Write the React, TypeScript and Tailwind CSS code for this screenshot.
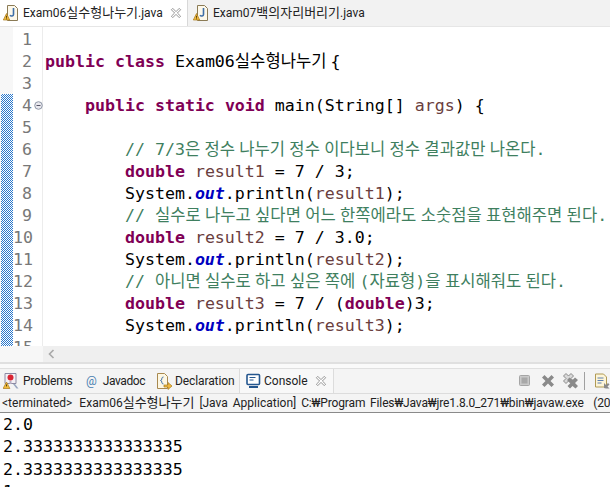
const uiFont = "font-['Roboto','Noto_Sans_CJK_KR',sans-serif]";

const kw = "font-bold text-[#7f0055]";
const cm = "text-[#3f7f5f] [word-spacing:-5.7px]";
const vr = "text-[#6a3e3e]";
const st = "font-bold italic text-[#0000c0]";

const JavaFileIcon = () => (
  <svg width="16" height="18" viewBox="0 0 16 18" className="shrink-0">
    <path d="M4.5 1.5h7l3 3v12h-10z" fill="#fdf8ea" stroke="#8a7a55" />
    <path d="M10.5 4v6.5c0 1.5-2.5 2-3.5.8" fill="none" stroke="#3f6fa8" strokeWidth="1.6" />
    <path d="M3.5 9.5l3.2 6.5H.3z" fill="#f1bc3c" stroke="#a8791c" strokeWidth="0.7" />
    <rect x="3.1" y="11.8" width="0.9" height="2" fill="#4a3308" />
    <rect x="3.1" y="14.4" width="0.9" height="0.9" fill="#4a3308" />
  </svg>
);

const CloseIcon = ({ size = 13 }: { size?: number }) => (
  <svg width={size} height={size} viewBox="0 0 13 13" className="shrink-0">
    <path
      d="M1.5 3L3 1.5 6.5 5 10 1.5 11.5 3 8 6.5 11.5 10 10 11.5 6.5 8 3 11.5 1.5 10 5 6.5z"
      fill="#fff"
      stroke="#8c8c8c"
    />
  </svg>
);

const ProblemsIcon = () => (
  <svg width="16" height="18" viewBox="0 0 16 18" className="shrink-0">
    <path d="M2 1.5h11v10H2z" fill="#f3f0f5" stroke="#8d8aa3" />
    <circle cx="7.5" cy="5.5" r="3" fill="#d92533" />
    <path d="M6.5 9h2v3h-2z" fill="#b8b0c4" />
    <path d="M3.5 10l3.4 6.5H.1z" fill="#f1bc3c" stroke="#a8791c" strokeWidth="0.7" />
    <rect x="3.1" y="12.4" width="0.9" height="2" fill="#4a3308" />
    <path d="M10 12h2l3.5 4.5h-2z" fill="#9aa7c0" />
  </svg>
);

const DeclarationIcon = () => (
  <svg width="18" height="18" viewBox="0 0 18 18" className="shrink-0">
    <path d="M2.5 1.5h7l3 3v12h-10z" fill="#fdf7e3" stroke="#a8894f" />
    <path d="M8.5 5C6.5 5 7 7 6.5 8L5.5 8.5l1 .5c.5 1 0 3 2 3" fill="none" stroke="#3f6fa8" />
    <path d="M9 13h4v-2.5l4 3.5-4 3.5V15H9z" fill="#f0b840" stroke="#a87d1c" strokeWidth="0.7" />
  </svg>
);

const ConsoleIcon = () => (
  <svg width="15" height="16" viewBox="0 0 15 16" className="shrink-0">
    <rect x="1" y="1.5" width="12.5" height="10" rx="1" fill="#fff" stroke="#24568e" strokeWidth="1.6" />
    <path d="M3.5 4.5h6M3.5 7h4" stroke="#24568e" />
    <path d="M3 14h9" stroke="#24568e" strokeWidth="2" />
  </svg>
);

const ToolbarIcons = () => (
  <div className="flex items-center">
    <svg width="12" height="12" viewBox="0 0 12 12" className="mr-[10px] shrink-0">
      <rect x="0.5" y="0.5" width="10" height="10" rx="1" fill="#c9c9c9" stroke="#a5a5a5" />
      <rect x="2.5" y="2.5" width="6" height="6" fill="#a8a8a8" />
    </svg>
    <svg width="14" height="14" viewBox="0 0 14 14" className="mr-[8px] shrink-0">
      <path d="M1 3.5L3.5 1 7 4.5 10.5 1 13 3.5 9.5 7 13 10.5 10.5 13 7 9.5 3.5 13 1 10.5 4.5 7z" fill="#8a8a8a" />
    </svg>
    <svg width="16" height="16" viewBox="0 0 16 16" className="mr-[5px] shrink-0">
      <path d="M0.5 3L3 0.5 5.5 3 8 0.5 10.5 3 8 5.5 10.5 8 8 10.5 5.5 8 3 10.5 0.5 8 3 5.5z" fill="#d8d8d8" stroke="#8a8a8a" />
      <path d="M4 7l2.5-2.5L9.5 7 12 4.5 15 7l-3 3 3 3-2.5 2.5L9.5 13 7 15.5 4.5 13l3-3z" fill="#8a8a8a" />
    </svg>
    <div className="mr-[9px] h-[18px] w-px shrink-0 bg-[#a0a0a0]" />
    <svg width="18" height="17" viewBox="0 0 18 17" className="shrink-0">
      <path d="M1.5 1h8l3 3v10h-11z" fill="#fdf5d8" stroke="#b09a55" />
      <path d="M3.5 5h6M3.5 7.5h6M3.5 10h4" stroke="#5d7fb0" />
      <path d="M10 10l2 2 2-2 1.5 1.5-2 2 2 2H12l-2-.5z" fill="#8a8a8a" />
    </svg>
  </div>
);

const Line = ({ children }: { children?: React.ReactNode }) => (
  <div className="h-[22px] whitespace-pre">{children}</div>
);

const numbers = [1, 2, 3, 4, 5, 6, 7, 8, 9, 10, 11, 12, 13, 14, 15];

export default function App() {
  return (
    <div className={`flex h-[487px] w-[610px] flex-col overflow-hidden bg-white ${uiFont}`}>
      <div className="flex h-[26px] shrink-0 bg-[#f2f2f2] text-[12px] text-[#222]">
        <div className="flex w-[188px] items-center gap-[4px] border-r border-[#d8d8d8] bg-white pl-[3px]">
          <JavaFileIcon />
          <span className="w-[143px] whitespace-nowrap">
            Exam06<span className="text-[13px]">실수형나누기</span>.java
          </span>
          <CloseIcon size={12} />
        </div>
        <div className="flex items-center gap-[4px] pl-[5px]">
          <JavaFileIcon />
          <span className="whitespace-nowrap">
            Exam07<span className="text-[13px]">백의자리버리기</span>.java
          </span>
        </div>
      </div>

      <div className="flex h-[320px] shrink-0 overflow-hidden border-t border-[#e6e6e6]">
        <div className="flex w-[13px] shrink-0 flex-col bg-[#f7f7f7] pl-px pt-[67px]">
          <div className="h-[252px] bg-[repeating-conic-gradient(#2a78cc_0_25%,#ffffff_0_50%)] bg-[length:2px_2px]" />
        </div>
        <div className="relative w-[30px] shrink-0 border-r border-[#ececec] pt-[2px] text-[16.6px] leading-[22px] text-[#787878] font-['DejaVu_Sans_Mono','Noto_Sans_CJK_KR',monospace]">
          {numbers.map((n) => (
            <div key={n} className="h-[22px] whitespace-nowrap pr-[10px] text-right">
              {n}
            </div>
          ))}
          <svg width="9" height="9" viewBox="0 0 9 9" className="absolute left-[21px] top-[74px]">
            <circle cx="4.5" cy="4.5" r="3.8" fill="#e8e8ee" stroke="#8d96a6" />
            <path d="M2.5 4.5h4" stroke="#556" />
          </svg>
        </div>
        <div className="min-w-0 flex-1 overflow-hidden pl-[2px] pt-[2px] text-[16.6px] leading-[22px] text-black font-['DejaVu_Sans_Mono','Noto_Sans_CJK_KR',monospace]">
          <Line />
          <Line>
            <span className={kw}>public</span> <span className={kw}>class</span>{" "}
            <span className="[word-spacing:-6px]">Exam06실수형나누기 {"{"}</span>
          </Line>
          <Line />
          <Line>
            {"    "}
            <span className={kw}>public</span> <span className={kw}>static</span> <span className={kw}>void</span> main(String[] <span className={vr}>args</span>) {"{"}
          </Line>
          <Line />
          <Line>
            {"        "}
            <span className="text-[#3f7f5f]">// </span>
            <span className={cm}>7/3은 정수 나누기 정수 이다보니 정수 결과값만 나온다.</span>
          </Line>
          <Line>
            {"        "}
            <span className={kw}>double</span> <span className={vr}>result1</span> = 7 / 3;
          </Line>
          <Line>
            {"        "}System.<span className={st}>out</span>.println(<span className={vr}>result1</span>);
          </Line>
          <Line>
            {"        "}
            <span className="text-[#3f7f5f]">// </span>
            <span className={cm}>실수로 나누고 싶다면 어느 한쪽에라도 소숫점을 표현해주면 된다.</span>
          </Line>
          <Line>
            {"        "}
            <span className={kw}>double</span> <span className={vr}>result2</span> = 7 / 3.0;
          </Line>
          <Line>
            {"        "}System.<span className={st}>out</span>.println(<span className={vr}>result2</span>);
          </Line>
          <Line>
            {"        "}
            <span className="text-[#3f7f5f]">// </span>
            <span className={cm}>아니면 실수로 하고 싶은 쪽에 (자료형)을 표시해줘도 된다.</span>
          </Line>
          <Line>
            {"        "}
            <span className={kw}>double</span> <span className={vr}>result3</span> = 7 / (<span className={kw}>double</span>)3;
          </Line>
          <Line>
            {"        "}System.<span className={st}>out</span>.println(<span className={vr}>result3</span>);
          </Line>
        </div>
      </div>

      <div className="flex h-[16px] shrink-0 bg-[#efefef]">
        <div className="w-[43px] bg-[#f7f7f7]" />
        <div className="flex w-[16px] items-center justify-center">
          <svg width="7" height="10" viewBox="0 0 7 10">
            <path d="M5.5 1L1.5 5l4 4" fill="none" stroke="#a8a8a8" strokeWidth="1.6" />
          </svg>
        </div>
      </div>

      <div className="h-[7px] shrink-0 border-t-2 border-b border-[#e0e0e0] bg-[#fafafa]" />

      <div className="flex h-[25px] shrink-0 items-stretch border-b border-[#dcdcdc] bg-[#f4f4f4] text-[12px] text-[#222]">
        <div className="flex w-[81px] shrink-0 items-center gap-[4px] pl-[3px]">
          <ProblemsIcon />
          <span className="tracking-[-0.2px]">Problems</span>
        </div>
        <div className="flex w-[72px] shrink-0 items-center gap-[6px] pl-[5px]">
          <span className="text-[#4a7fb0]">@</span>
          <span className="tracking-[-0.4px]">Javadoc</span>
        </div>
        <div className="flex w-[86px] shrink-0 items-center gap-[2px] pl-[2px]">
          <DeclarationIcon />
          <span className="tracking-[-0.1px]">Declaration</span>
        </div>
        <div className="flex w-[95px] shrink-0 items-center gap-[3px] border-x border-[#dcdcdc] bg-[#f8f8f8] pl-[6px]">
          <ConsoleIcon />
          <span className="w-[48px]">Console</span>
          <CloseIcon size={12} />
        </div>
        <div className="flex flex-1 items-center overflow-hidden pl-[185px]">
          <ToolbarIcons />
        </div>
      </div>

      <div className="flex h-[19px] shrink-0 items-center overflow-hidden whitespace-pre border-b border-[#8a8a8a] bg-[#f4f4f4] pl-[2px] text-[12px] text-[#222] [word-spacing:2px]">
        {"<terminated> "}
        <span className="ml-[2px]">
          Exam06<span className="text-[13px]">실수형나누기</span>
        </span>
        {" [Java Application] "}
        <span className="tracking-[-0.15px]">{"C:₩Program Files₩Java₩jre1.8.0_271₩bin₩javaw.exe  (2021"}</span>
      </div>

      <div className="min-h-0 flex-1 overflow-hidden pl-[3px] pt-[1px] text-[16.6px] leading-[22.3px] text-black font-['DejaVu_Sans_Mono',monospace]">
        <div>2.0</div>
        <div>2.3333333333333335</div>
        <div>2.3333333333333335</div>
        <div>1</div>
      </div>
    </div>
  );
}
